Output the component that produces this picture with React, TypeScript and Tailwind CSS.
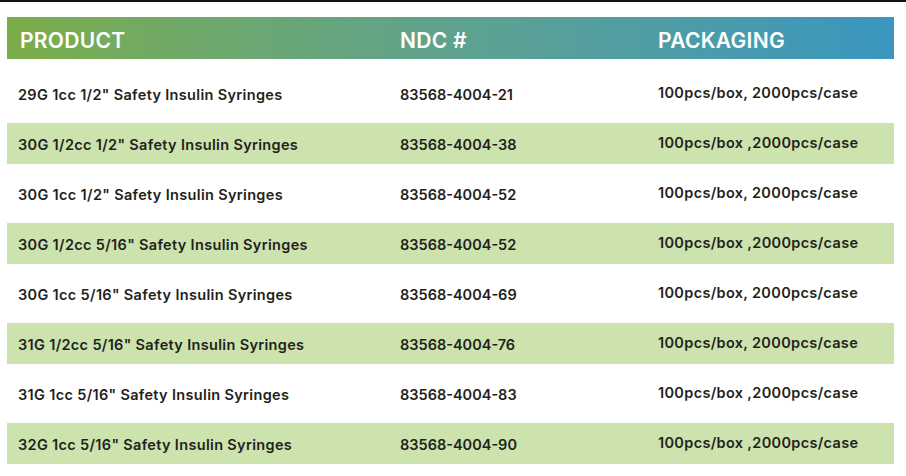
import React from "react";

const rows = [
  ["29G 1cc 1/2\" Safety Insulin Syringes", "83568-4004-21", "100pcs/box, 2000pcs/case"],
  ["30G 1/2cc 1/2\" Safety Insulin Syringes", "83568-4004-38", "100pcs/box ,2000pcs/case"],
  ["30G 1cc 1/2\" Safety Insulin Syringes", "83568-4004-52", "100pcs/box, 2000pcs/case"],
  ["30G 1/2cc 5/16\" Safety Insulin Syringes", "83568-4004-52", "100pcs/box ,2000pcs/case"],
  ["30G 1cc 5/16\" Safety Insulin Syringes", "83568-4004-69", "100pcs/box, 2000pcs/case"],
  ["31G 1/2cc 5/16\" Safety Insulin Syringes", "83568-4004-76", "100pcs/box, 2000pcs/case"],
  ["31G 1cc 5/16\" Safety Insulin Syringes", "83568-4004-83", "100pcs/box ,2000pcs/case"],
  ["32G 1cc 5/16\" Safety Insulin Syringes", "83568-4004-90", "100pcs/box ,2000pcs/case"],
];

const App = () => {
  return (
    <div className="w-[906px] h-[476px] bg-white overflow-hidden font-['Inter',sans-serif]">
      <div className="h-[2px] bg-[#111]"></div>

      <div className="pl-[7px] pr-[12px] pt-[15px]">
        {/* header */}
        <div className="flex items-center h-[42px] pt-[5px] text-white font-semibold text-[21px] tracking-[0.3px] bg-gradient-to-r from-[#7bad47] via-[#5fa28e] to-[#3a96bf]">
          <div className="w-[393px] pl-[13px]">PRODUCT</div>
          <div className="w-[258px]">NDC #</div>
          <div className="flex-1">PACKAGING</div>
        </div>

        <div className="flex flex-col gap-[9px] pt-[14px]">
          {rows.map((r, i) => (
            <div
              key={i}
              className={
                "flex items-center h-[41px] text-[14.5px] font-semibold tracking-[0.33px] text-[#231f20] " +
                (i % 2 === 1 ? "bg-[#cce3ae]" : "")
              }
            >
              <div className="w-[393px] pl-[11px] pt-[2px]">{r[0]}</div>
              <div className="w-[258px] pt-[2px] tracking-normal">{r[1]}</div>
              <div className="flex-1 pb-[2px]">{r[2]}</div>
            </div>
          ))}
        </div>
      </div>
    </div>
  );
};

export default App;
